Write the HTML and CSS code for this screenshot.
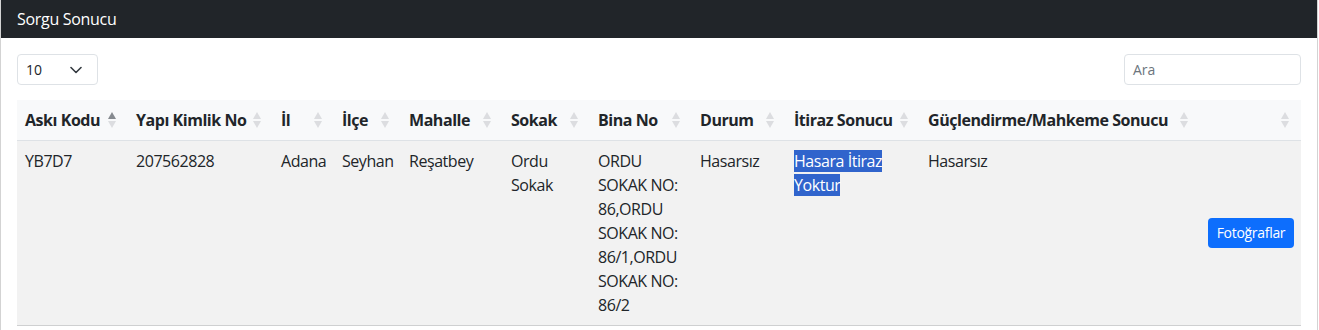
FILE: index.html
```html
<!DOCTYPE html>
<html lang="tr">
<head>
<meta charset="utf-8">
<title>Sorgu Sonucu</title>
<link rel="stylesheet" href="styles.css">
</head>
<body>
<div class="card">
  <div class="card-header">Sorgu Sonucu</div>
  <div class="card-body">
    <div class="controls">
      <div class="select">
        <span>10</span>
        <svg width="12" height="8" viewBox="0 0 12 8"><path d="M1 1.5 L6 6.5 L11 1.5" fill="none" stroke="#343a40" stroke-width="1.6" stroke-linecap="round" stroke-linejoin="round"/></svg>
      </div>
      <div class="search">Ara</div>
    </div>
    <table class="table">
      <colgroup>
        <col class="c1"><col class="c2"><col class="c3"><col class="c4"><col class="c5"><col class="c6"><col class="c7"><col class="c8"><col class="c9"><col class="c10"><col class="c11">
      </colgroup>
      <thead>
        <tr>
          <th class="sorted">Askı Kodu<span class="order"></span></th>
          <th>Yapı Kimlik No<span class="order"></span></th>
          <th>İl<span class="order"></span></th>
          <th>İlçe<span class="order"></span></th>
          <th>Mahalle<span class="order"></span></th>
          <th>Sokak<span class="order"></span></th>
          <th>Bina No<span class="order"></span></th>
          <th>Durum<span class="order"></span></th>
          <th>İtiraz Sonucu<span class="order"></span></th>
          <th>Güçlendirme/Mahkeme Sonucu<span class="order"></span></th>
          <th><span class="order"></span></th>
        </tr>
      </thead>
      <tbody>
        <tr>
          <td>YB7D7</td>
          <td>207562828</td>
          <td>Adana</td>
          <td>Seyhan</td>
          <td>Reşatbey</td>
          <td>Ordu Sokak</td>
          <td>ORDU SOKAK NO: 86,ORDU SOKAK NO: 86/1,ORDU SOKAK NO: 86/2</td>
          <td>Hasarsız</td>
          <td><span class="sel">Hasara İtiraz</span><span class="sel-gap"> </span><span class="sel">Yoktur</span></td>
          <td>Hasarsız</td>
          <td class="action"><button class="btn">Fotoğraflar</button></td>
        </tr>
      </tbody>
    </table>
  </div>
</div>
</body>
</html>
```

FILE: styles.css
```css
* { box-sizing: border-box; }
body {
  margin: 0;
  font-family: "Open Sans", "Noto Sans", sans-serif;
  font-size: 16px;
  line-height: 24px;
  color: #212529;
  background: #fff;
}
.card {
  width: 1318px;
  border: 1px solid #d3d3d3;
  border-top: none;
  border-radius: 0 0 4px 4px;
  height: 340px;
}
.card-header {
  background: #212529;
  color: #fff;
  height: 38px;
  padding: 0 16px;
  display: flex;
  align-items: center;
  letter-spacing: -0.3px;
}
.card-body {
  padding: 16px;
}
.controls {
  display: flex;
  justify-content: space-between;
  align-items: center;
  margin-bottom: 15px;
}
.select {
  width: 81px;
  height: 31px;
  border: 1px solid #dee2e6;
  border-radius: 4px;
  display: flex;
  align-items: center;
  justify-content: space-between;
  padding: 0 15px 0 8px;
  font-size: 14px;
}
.select svg { display: block; }
.search {
  width: 177px;
  height: 31px;
  border: 1px solid #dee2e6;
  border-radius: 4px;
  padding: 0 8px;
  display: flex;
  align-items: center;
  font-size: 14px;
  color: #6c757d;
}
.table {
  width: 1284px;
  border-collapse: collapse;
  table-layout: fixed;
  letter-spacing: -0.45px;
}
.c1 { width: 111px; }
.c2 { width: 145px; }
.c3 { width: 61px; }
.c4 { width: 67px; }
.c5 { width: 102px; }
.c6 { width: 87px; }
.c7 { width: 102px; }
.c8 { width: 94px; }
.c9 { width: 134px; }
.c10 { width: 280px; }
.c11 { width: 101px; }
th {
  position: relative;
  text-align: left;
  font-weight: 700;
  padding: 8px;
  background: #f8f9fa;
  border-bottom: 1px solid #dee2e6;
  white-space: nowrap;
}
.order {
  position: absolute;
  right: 11px;
  top: 11px;
  width: 9px;
  height: 18px;
}
.order::before, .order::after {
  content: "";
  position: absolute;
  left: 0;
  width: 0;
  height: 0;
  border-left: 4.5px solid transparent;
  border-right: 4.5px solid transparent;
}
.order::before {
  top: 1px;
  border-bottom: 7px solid #dcdde0;
}
.order::after {
  bottom: 1px;
  border-top: 7px solid #dcdde0;
}
.sorted .order::before { border-bottom-color: #868a8f; }
td {
  padding: 8px;
  vertical-align: top;
  background: #f2f2f2;
  border-bottom: 1px solid #cfd0d1;
}
td.action {
  vertical-align: middle;
  text-align: right;
  padding-right: 7px;
}
.sel, .sel-gap {
  background: #3064cc;
  color: #fff;
}
.btn {
  font-family: inherit;
  font-size: 14px;
  line-height: 20px;
  letter-spacing: -0.3px;
  color: #fff;
  background: #0d6efd;
  border: none;
  border-radius: 4px;
  padding: 5px 8px;
  width: 86px;
  height: 30px;
}
```
